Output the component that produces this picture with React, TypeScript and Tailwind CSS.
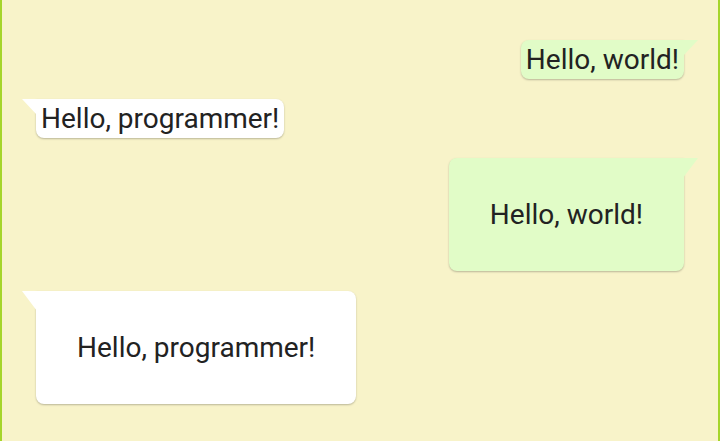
import React from "react";

function Bubble({
  side,
  big,
  text,
}: {
  side: "left" | "right";
  big?: boolean;
  text: string;
}) {
  const right = side === "right";
  const bg = right ? "bg-[#e1fcc7]" : "bg-white";
  return (
    <div className={"relative " + (right ? "self-end pr-[14px]" : "self-start pl-[14px]")}>
      <div
        className={
          "absolute top-0 w-[15px] " +
          bg +
          " " +
          (big ? "h-[20px] " : "h-[16px] ") +
          (right
            ? "right-0 [clip-path:polygon(0_0,100%_0,0_100%)]"
            : "left-0 [clip-path:polygon(0_0,100%_0,100%_100%)]")
        }
      />
      <div
        className={
          bg +
          " " +
          (right ? "rounded-l-lg rounded-br-lg" : "rounded-r-lg rounded-bl-lg") +
          " shadow-[0_1px_2px_rgba(0,0,0,0.25)] text-[#222] text-[28px] leading-[33px] " +
          (big ? "px-[41px] py-[40px]" : "px-[5px] py-[3px]")
        }
      >
        {text}
      </div>
    </div>
  );
}

export default function App() {
  return (
    <div className="w-[720px] h-[441px] bg-[#f8f3c9] border-x-2 border-[#a6d52a] overflow-hidden flex flex-col gap-5 px-5 pt-10 font-['Roboto',sans-serif]">
      <Bubble side="right" text="Hello, world!" />
      <Bubble side="left" text="Hello, programmer!" />
      <Bubble side="right" big text="Hello, world!" />
      <Bubble side="left" big text="Hello, programmer!" />
    </div>
  );
}
